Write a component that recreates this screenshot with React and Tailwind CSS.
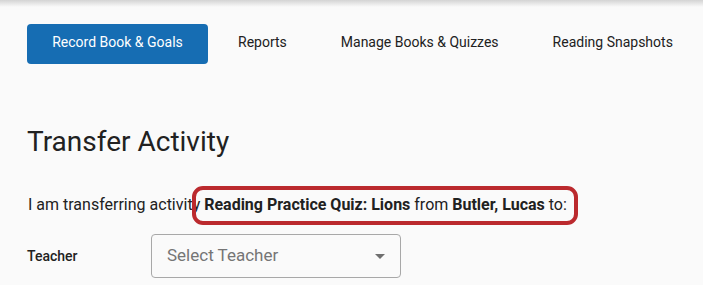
import React from "react";

export default function App() {
  return (
    <div className="relative w-[703px] h-[285px] overflow-hidden bg-[#fafafa] text-[#212121]" style={{ fontFamily: "Roboto, 'Liberation Sans', sans-serif" }}>
      <div className="h-[7px] bg-gradient-to-b from-[#d4d4d4] to-[#fafafa]" />
      <nav className="flex items-center pl-[27px] mt-[17px] text-[14px]">
        <button className="h-[40px] w-[181px] rounded-[4px] bg-[#166db3] text-white text-[14px] flex items-center justify-center pb-[3px]">
          Record Book &amp; Goals
        </button>
        <span className="ml-[30px] mb-[3px]">Reports</span>
        <span className="ml-[54px] mb-[3px]">Manage Books &amp; Quizzes</span>
        <span className="ml-[54px] mb-[3px]">Reading Snapshots</span>
      </nav>
      <h1 className="ml-[27px] mt-[60px] text-[28px] leading-[36px] text-[#212121]">Transfer Activity</h1>
      <p className="ml-[28px] mt-[33px] text-[16px] leading-[24px]">
        I am transferring activity <b className="font-bold">Reading Practice Quiz: Lions</b> from <b className="font-bold">Butler, Lucas</b> to:
      </p>
      <div className="flex items-center ml-[27px] mt-[17px]">
        <span className="w-[124px] text-[14px] font-medium">Teacher</span>
        <div className="flex items-center justify-between w-[250px] h-[44px] border border-[#a8a8a8] rounded-[4px] pl-[15px] pr-[15px] bg-[#fafafa]">
          <span className="text-[17px] text-[#757575]">Select Teacher</span>
          <span className="w-0 h-0 border-l-[5px] border-r-[5px] border-t-[5px] border-l-transparent border-r-transparent border-t-[#6f6f6f]" />
        </div>
      </div>
      <div className="absolute left-[192px] top-[186px] w-[386px] h-[39px] rounded-[11px] border-[4px] border-[#bb2a2e] pointer-events-none" />
    </div>
  );
}
